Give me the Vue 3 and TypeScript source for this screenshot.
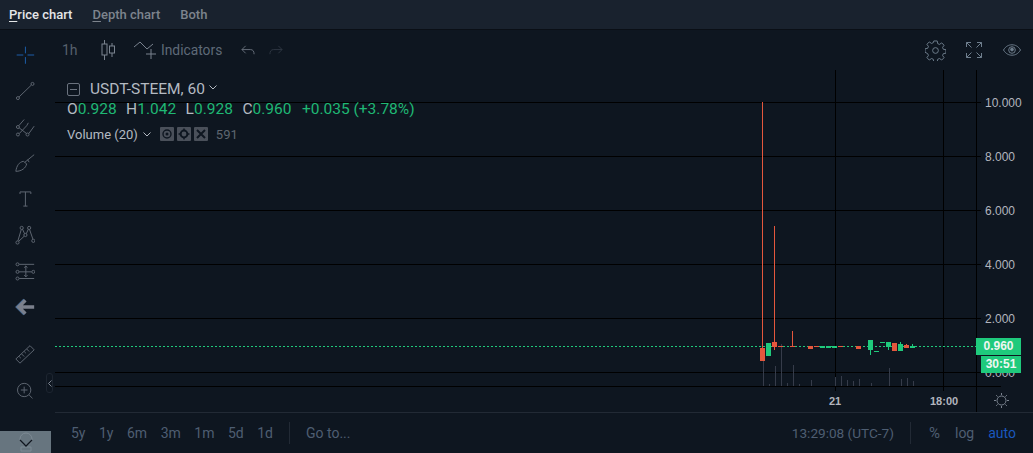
<script setup lang="ts">
interface Candle { x: number; top: number; bottom: number; wickTop?: number; wickBottom?: number; up: boolean }

const priceLevels = [
  { y: 102, label: '10.000' },
  { y: 156, label: '8.000' },
  { y: 210, label: '6.000' },
  { y: 264, label: '4.000' },
  { y: 318, label: '2.000' },
  { y: 372, label: '0.000' },
]

const candles: Candle[] = [
  { x: 760, top: 348, bottom: 361, wickTop: 102, up: false },
  { x: 766, top: 343, bottom: 356, up: true },
  { x: 772, top: 342, bottom: 347, wickTop: 226, wickBottom: 350, up: false },
  { x: 778, top: 346, bottom: 347, up: false },
  { x: 790, top: 346, bottom: 347, wickTop: 331, up: false },
  { x: 808, top: 346, bottom: 349, up: false },
  { x: 814, top: 346, bottom: 347, up: false },
  { x: 820, top: 346, bottom: 348, up: true },
  { x: 826, top: 346, bottom: 348, up: true },
  { x: 832, top: 346, bottom: 348, up: true },
  { x: 838, top: 346, bottom: 347, up: false },
  { x: 856, top: 346, bottom: 349, up: false },
  { x: 868, top: 340, bottom: 350, wickBottom: 355, up: true },
  { x: 874, top: 351, bottom: 352, up: true },
  { x: 880, top: 342, bottom: 343, up: true },
  { x: 886, top: 342, bottom: 347, wickBottom: 350, up: true },
  { x: 892, top: 343, bottom: 351, up: false },
  { x: 898, top: 344, bottom: 351, wickTop: 342, up: true },
  { x: 904, top: 345, bottom: 348, wickTop: 344, up: false },
  { x: 910, top: 346, bottom: 348, wickTop: 344, up: true },
]

const volumes: [number, number][] = [
  [763, 361], [769, 384], [775, 366], [781, 344], [787, 383], [793, 365], [799, 384], [811, 380],
  [835, 377], [841, 376], [847, 380], [853, 381], [859, 379], [871, 383], [889, 368], [901, 379],
  [907, 378], [913, 381],
]

const ranges = ['5y', '1y', '6m', '3m', '1m', '5d', '1d']
</script>

<template>
  <div class="app">
    <nav class="tabs">
      <span class="tab active"><u>P</u>rice chart</span>
      <span class="tab"><u>D</u>epth chart</span>
      <span class="tab">Both</span>
    </nav>
    <div class="body">
      <aside class="tools">
        <div class="tool-list">
          <svg class="tool" viewBox="0 0 24 24" fill="none" stroke="#1c5da8" stroke-width="1.200"><path d="M2 12h8M15 12h8M12.500 2v8M12.500 14.500v8" /></svg>
          <svg class="tool" viewBox="0 0 24 24" fill="none" stroke="#5d6570" stroke-width="1.200"><circle cx="3.500" cy="20.500" r="1.800" /><circle cx="21" cy="3.500" r="1.800" /><path d="M5 19 19.500 5" /></svg>
          <svg class="tool" viewBox="0 0 24 24" fill="none" stroke="#5d6570" stroke-width="1.200"><circle cx="3.500" cy="12" r="1.800" /><circle cx="3.500" cy="21" r="1.800" /><circle cx="15" cy="21" r="1.800" /><path d="M4.500 10.500 11 3M5 20 14 10.500 16 7M5 13l9 7M16.500 20 23 11" /></svg>
          <svg class="tool" viewBox="0 0 24 24" fill="none" stroke="#5d6570" stroke-width="1.200"><path d="M1 22c1-7 4-11 9-12l4 3c-1 5-6 9-13 9zM12 11l11-9M15 8l2 3" /></svg>
          <svg class="tool" viewBox="0 0 24 24" fill="none" stroke="#5d6570" stroke-width="1.200"><path d="M6 6V3.500h13V6M12.500 3.500V20.500M10 20.500h5" /></svg>
          <svg class="tool" viewBox="0 0 24 24" fill="none" stroke="#5d6570" stroke-width="1.200"><circle cx="8" cy="3.500" r="1.900" /><circle cx="17" cy="3.500" r="1.900" /><circle cx="3" cy="21" r="1.900" /><circle cx="22" cy="19" r="1.900" /><circle cx="12.500" cy="12" r="1.900" /><path d="M7.500 5.500 3.500 19M17.500 5.500 21.500 17M9 5l2.500 5.500M16 5l-2.500 5.500M11 13.500 4.500 19.500" /></svg>
          <svg class="tool" viewBox="0 0 24 24" fill="none" stroke="#5d6570" stroke-width="1.200"><circle cx="3" cy="4" r="1.800" /><circle cx="3" cy="13" r="1.800" /><circle cx="22" cy="13" r="1.800" /><circle cx="3" cy="21" r="1.800" /><path d="M5 4h18M5 13h15M5 21h18M13 6v13M11 8l2-2 2 2M11 17l2 2 2-2" /></svg>
          <svg class="tool" viewBox="0 0 24 24" fill="none" stroke-width="4"><path d="M11.500 3.500 3 12l8.500 8.500" stroke="#4d6e96" /><path d="M23 12H5M12.500 4 4.500 12l8 8" stroke="#7b808c" /></svg>
          <svg class="tool ruler" viewBox="0 0 24 24" fill="none" stroke="#5d6570" stroke-width="1.200"><path d="M1 18 18 2l5 5L6 23zM5 15l2 2M8 12l3 3M11 9l2 2M14 6l3 3" /></svg>
          <svg class="tool" viewBox="0 0 24 24" fill="none" stroke="#5d6570" stroke-width="1.200"><circle cx="11" cy="12" r="8" /><path d="M17 18l4 4M11 8v8M7 12h8" /></svg>
        </div>
        <div class="tools-more">
          <svg width="20" height="22" viewBox="0 0 20 22" fill="none"><circle cx="10" cy="8" r="6" stroke="#7d8a94" /><path d="M5 20v-4h10v4z" stroke="#7d8a94" /><path d="M4 9l6 6 6-6" stroke="#10161f" stroke-width="1.300" /></svg>
        </div>
        <span class="collapse">
          <svg width="4" height="7" viewBox="0 0 4 7" fill="none" stroke="#7d8590"><path d="M3.500.5.500 3.500l3 3" /></svg>
        </span>
      </aside>

      <main class="main">
        <div class="toolbar">
          <span class="interval">1h</span>
          <svg class="candles-icon" width="14" height="20" viewBox="0 0 14 20" fill="none" stroke="#7a838f"><path d="M3.500 0v4M3.500 15v5M11 3v3M11 13v4" /><rect x="1" y="4" width="5" height="11" /><rect x="8.500" y="6" width="5" height="7" /></svg>
          <span class="indicators">
            <svg width="23" height="20" viewBox="0 0 23 20" fill="none" stroke="#7a838f"><path d="M0 7l6-5 7 7 6-5M17 9v10M12 14h10" /></svg>
            Indicators
          </span>
          <svg class="undo" width="14" height="11" viewBox="0 0 15 11" fill="none" stroke="#69717d"><path d="M5 .5 1 4.500l4 4M1 4.500h9c3 0 4 2 4 5" /></svg>
          <svg class="redo" width="14" height="11" viewBox="0 0 15 11" fill="none" stroke="#2f3843"><path d="M10 .5l4 4-4 4M14 4.500H5c-3 0-4 2-4 5" /></svg>
          <span class="spacer"></span>
          <svg class="settings" width="21" height="21" viewBox="0 0 22 22" fill="none" stroke="#6f7f8e"><circle cx="11" cy="11" r="3" /><path d="M9.200 1h3.600l.5 2.800 1.900.8 2.300-1.600 2.500 2.500-1.600 2.300.8 1.900 2.800.5v3.600l-2.800.5-.8 1.900 1.600 2.300-2.500 2.500-2.300-1.600-1.900.8-.5 2.800H9.200l-.5-2.800-1.900-.8-2.300 1.600-2.500-2.500 1.600-2.300-.8-1.900L0 12.800V9.200l2.800-.5.8-1.900L2 4.500 4.500 2l2.300 1.600 1.900-.8z" /></svg>
          <svg class="full" width="16" height="16" viewBox="0 0 16 16" fill="none" stroke="#6f7f8e"><path d="M.5 5V.5H5M.5.500l5 5M15.500 5V.5H11M15.500.500l-5 5M.5 11v4.500H5M.5 15.500l5-5M15.500 11v4.500H11M15.500 15.500l-5-5" /></svg>
          <svg class="eye" width="18" height="12" viewBox="0 0 19 12" fill="none" stroke="#6f7f8e"><path d="M.5 6C3 2 6 .5 9.500.5S16 2 18.500 6C16 10 13 11.500 9.500 11.500S3 10 .5 6z" /><circle cx="9.500" cy="6" r="3.500" /><circle cx="9.500" cy="5.500" r="1.500" fill="#6f7f8e" /></svg>
        </div>

        <div class="chart">
          <svg class="plot" width="978" height="342" viewBox="55 70 978 342">
            <g stroke="#000" stroke-width="1" shape-rendering="crispEdges">
              <line x1="835.500" y1="70" x2="835.500" y2="391" />
              <line x1="943.500" y1="70" x2="943.500" y2="391" />
              <line x1="976.500" y1="70" x2="976.500" y2="412" />
              <line x1="55" y1="386.500" x2="1001" y2="386.500" />
              <line v-for="l in priceLevels" :key="l.y" x1="55" :y1="l.y + 0.5" x2="981" :y2="l.y + 0.5" />
            </g>
            <g stroke="#363c4a" shape-rendering="crispEdges">
              <line v-for="v in volumes" :key="v[0]" :x1="v[0] + 0.5" :y1="v[1]" :x2="v[0] + 0.5" y2="386" />
            </g>
            <line x1="55" y1="346.500" x2="976" y2="346.500" stroke="#1fca7c" stroke-dasharray="2 2" shape-rendering="crispEdges" />
            <g v-for="c in candles" :key="c.x" shape-rendering="crispEdges">
              <line
                :x1="c.x + 2.5"
                :y1="c.wickTop ?? c.top"
                :x2="c.x + 2.5"
                :y2="c.wickBottom ?? c.bottom"
                :stroke="c.up ? '#1fca7c' : '#e4573d'"
              />
              <rect :x="c.x" :y="c.top" width="5" :height="c.bottom - c.top" :fill="c.up ? '#1fca7c' : '#e4573d'" />
            </g>
            <g class="axis-text">
              <text v-for="l in priceLevels" :key="l.label" x="985" :y="l.y + 4.500">{{ l.label }}</text>
              <text x="829" y="405" class="bold">21</text>
              <text x="930" y="405" class="bold">18:00</text>
            </g>
          </svg>

          <div class="legend">
            <div class="symbol">
              <span class="minus"></span>
              <span>USDT-STEEM, 60</span>
              <svg class="caret" width="8" height="5" viewBox="0 0 8 5" fill="none" stroke="#b4bac2"><path d="M.5.500 4 4 7.500.500" /></svg>
            </div>
            <div class="ohlc">
              <span><b>O</b>0.928</span>
              <span><b>H</b>1.042</span>
              <span><b>L</b>0.928</span>
              <span><b>C</b>0.960</span>
              <span>+0.035 (+3.78%)</span>
            </div>
            <div class="volume">
              <span>Volume (20)</span>
              <svg class="caret" width="8" height="5" viewBox="0 0 8 5" fill="none" stroke="#b4bac2"><path d="M.5.500 4 4 7.500.500" /></svg>
              <span class="vol-buttons">
                <svg width="14" height="14" viewBox="0 0 14 14"><rect width="14" height="14" rx="1" fill="#4a505a" /><circle cx="7" cy="7" r="4" fill="none" stroke="#0e1620" stroke-width="1.400" /><circle cx="7" cy="7" r="1.500" fill="#0e1620" /></svg>
                <svg width="14" height="14" viewBox="0 0 14 14"><rect width="14" height="14" rx="1" fill="#4a505a" /><circle cx="7" cy="7" r="3.400" fill="none" stroke="#0e1620" stroke-width="2" /><path d="M7 1.500v2M7 10.500v2M1.500 7h2M10.500 7h2" stroke="#0e1620" stroke-width="1.500" /></svg>
                <svg width="14" height="14" viewBox="0 0 14 14"><rect width="14" height="14" rx="1" fill="#4a505a" /><path d="M3 3l8 8M11 3l-8 8" stroke="#0e1620" stroke-width="2" /></svg>
              </span>
              <span class="vol-value">591</span>
            </div>
          </div>

          <span class="price-tag">0.960</span>
          <span class="timer-tag">30:51</span>
          <svg class="sun" width="15" height="15" viewBox="0 0 15 15" fill="none" stroke="#7a838f"><circle cx="7.500" cy="7.500" r="4.500" /><path d="M7.500 0v2M7.500 13v2M0 7.500h2M13 7.500h2M2.200 2.200l1.400 1.400M11.400 11.400l1.400 1.400M2.200 12.800l1.400-1.400M11.400 3.600l1.400-1.400" /></svg>
        </div>

        <footer class="footer">
          <div class="ranges">
            <span v-for="r in ranges" :key="r">{{ r }}</span>
          </div>
          <span class="divider"></span>
          <span class="goto">Go to...</span>
          <span class="spacer"></span>
          <span class="clock">13:29:08 (UTC-7)</span>
          <span class="divider"></span>
          <span class="percent">%</span>
          <span class="log">log</span>
          <span class="auto">auto</span>
        </footer>
      </main>
    </div>
  </div>
</template>

<style>
html, body { background: #0e1620; }
</style>

<style scoped>
.app {
  width: 1033px;
  height: 453px;
  overflow: hidden;
  display: flex;
  flex-direction: column;
  background: #0e1620;
  font-family: Roboto, "Liberation Sans", sans-serif;
}

.tabs {
  height: 30px;
  flex: none;
  display: flex;
  align-items: center;
  gap: 20px;
  padding-left: 9px;
  background: #19222e;
  border-bottom: 1px solid #0a0f16;
  box-sizing: border-box;
  font-size: 13px;
  font-weight: 500;
  color: #7d848d;
}
.tab.active { color: #e4e6e8; }
.tab u { text-underline-offset: 2px; }

.body { position: relative; flex: 1; display: flex; min-height: 0; }

.tools {
  position: relative;
  width: 55px;
  flex: none;
  display: flex;
  flex-direction: column;
}
.tool-list {
  flex: 1;
  padding: 15px 0 0 15px;
  display: flex;
  flex-direction: column;
  gap: 16px;
}
.tool { width: 20px; height: 20px; flex: none; }
.tool.ruler { margin-top: 11px; }
.tools-more {
  width: 51px;
  height: 22px;
  background: #67757f;
  display: flex;
  align-items: center;
  justify-content: center;
}
.collapse {
  position: absolute;
  left: 46px;
  top: 343px;
  width: 7px;
  height: 20px;
  border: 1px solid #1d2530;
  border-radius: 3px;
  display: flex;
  align-items: center;
  justify-content: center;
  box-sizing: border-box;
}

.main { flex: 1; min-width: 0; display: flex; flex-direction: column; }

.toolbar {
  height: 40px;
  flex: none;
  display: flex;
  align-items: center;
  padding: 0 12px 0 7px;
  color: #5e6a78;
  font-size: 14px;
}
.interval { color: #56606d; width: 39px; }
.candles-icon { margin-right: 19px; }
.indicators {
  display: flex;
  align-items: center;
  gap: 4px;
  color: #5e6a78;
  font-size: 13.800px;
  margin-right: 19px;
}
.redo { margin-left: 14px; }
.spacer { flex: 1; }
.full { margin-left: 20px; }
.eye { margin-left: 21px; }

.chart { position: relative; height: 342px; flex: none; }
.plot { position: absolute; left: 0; top: 0; display: block; }
.axis-text text {
  font-family: "Liberation Sans", sans-serif;
  font-size: 12px;
  fill: #b2b5be;
}
.axis-text .bold { font-weight: 700; font-size: 11px; }

.legend {
  position: absolute;
  left: 12px;
  top: 9px;
  color: #b4bac2;
}
.symbol {
  display: flex;
  align-items: center;
  height: 20px;
  font-size: 15.500px;
}
.minus {
  position: relative;
  width: 13px;
  height: 13px;
  margin-right: 10px;
  border: 1px solid #6a727e;
  border-radius: 2px;
  box-sizing: border-box;
}
.minus::after {
  content: '';
  position: absolute;
  left: 2px;
  right: 2px;
  top: 5px;
  height: 1px;
  background: #6a727e;
}
.symbol .caret { margin-left: 4px; margin-bottom: 3px; }
.ohlc {
  display: flex;
  gap: 9.500px;
  height: 20px;
  align-items: center;
  font-size: 15.500px;
  color: #1fb874;
}
.ohlc b { font-weight: 400; color: #b4bac2; }
.ohlc span:last-child { margin-left: 1px; }
.volume {
  display: flex;
  align-items: center;
  height: 24px;
  margin-top: 3px;
  font-size: 13px;
}
.volume .caret { margin-left: 5px; }
.vol-buttons { display: flex; gap: 3px; margin-left: 9px; }
.vol-value { margin-left: 8px; color: #5f6670; }

.price-tag, .timer-tag {
  position: absolute;
  background: #1fca7c;
  color: #eef7f2;
  font-family: "Liberation Sans", sans-serif;
  font-size: 12px;
  font-weight: 700;
  text-align: center;
}
.price-tag { left: 921px; top: 268px; width: 45px; height: 17px; line-height: 17px; }
.timer-tag { left: 926px; top: 286px; width: 40px; height: 17px; line-height: 17px; }
.sun { position: absolute; left: 939px; top: 323px; }

.footer {
  height: 41px;
  flex: none;
  display: flex;
  align-items: center;
  border-top: 1px solid #222a35;
  box-sizing: border-box;
  padding: 0 17px 0 16px;
  font-size: 14px;
  color: #4e5e72;
}
.ranges { display: flex; gap: 13.500px; }
.divider { width: 1px; height: 22px; background: #222a35; margin: 0 16px; }
.clock { font-size: 13.600px; }
.percent { font-size: 15px; margin-left: 2px; }
.log { margin-left: 15px; }
.auto { margin-left: 14px; color: #1a58bd; }
</style>
